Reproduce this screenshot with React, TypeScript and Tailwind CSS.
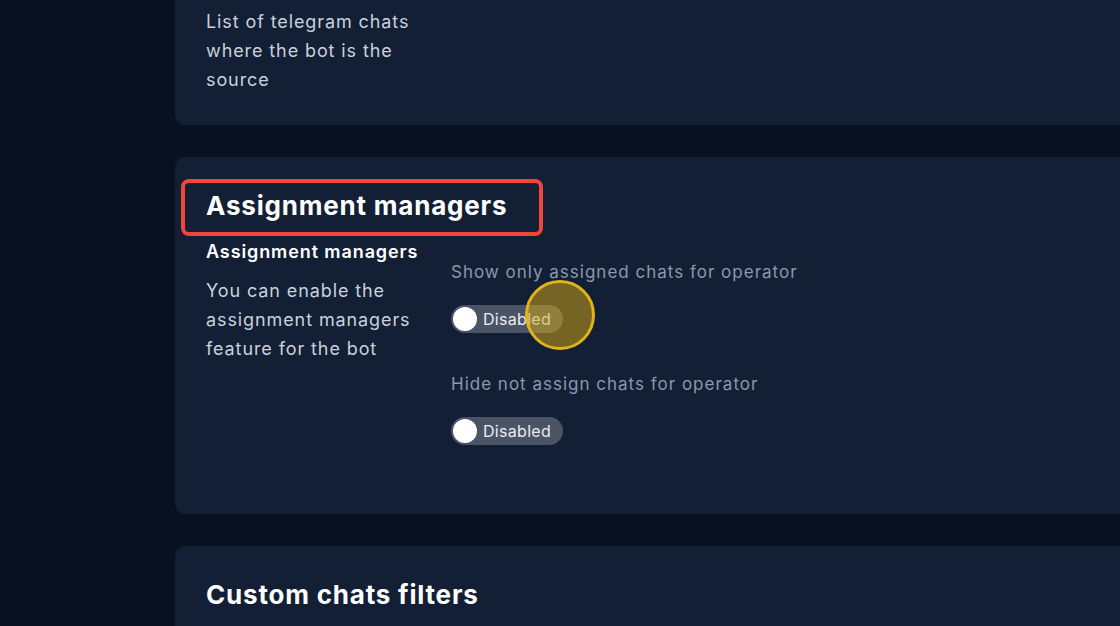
import React from "react";

const font = { fontFamily: "Inter, 'Noto Sans', sans-serif" };

function Toggle({ label }: { label: string }) {
  return (
    <div className="flex h-[28px] w-[112px] items-center gap-[6px] rounded-full bg-[#4a5466] pl-[2px]">
      <span className="h-[24px] w-[24px] rounded-full bg-white" />
      <span className="text-[16px] tracking-[0.3px] text-[#e9ecf1]">{label}</span>
    </div>
  );
}

function Setting({ label, first }: { label: string; first?: boolean }) {
  return (
    <div className={first ? "" : "mt-[37px]"}>
      <p className="text-[17px] leading-[29px] tracking-[1px] text-[#8d98ac]">{label}</p>
      <div className="mt-[18px]">
        <Toggle label="Disabled" />
      </div>
    </div>
  );
}

export default function App() {
  return (
    <div className="h-[626px] w-[1120px] overflow-hidden bg-[#08111f]" style={font}>
      <div className="w-[1200px] pl-[175px]">
        {/* source chats card, scrolled above the top */}
        <section className="-mt-[20px] rounded-[10px] bg-[#131f35] pt-[27px] pb-[31px] pl-[31px]">
          <p className="w-[228px] text-[18px] leading-[29px] tracking-[0.9px] text-[#c9d1dd]">
            List of telegram chats where the bot is the source
          </p>
        </section>

        <section className="mt-[32px] h-[357px] rounded-[10px] bg-[#131f35] pt-[33px] pl-[31px]">
          <div className="relative">
            <h2 className="text-[26px] font-bold leading-[32px] tracking-[0.8px] text-white">Assignment managers</h2>
            <div className="absolute -top-[11px] -left-[25px] h-[57px] w-[362px] rounded-[8px] border-[4px] border-[#f0453a]" />
          </div>
          <div className="mt-[16px] flex">
            <div className="w-[245px]">
              <p className="text-[18px] font-semibold leading-[28px] tracking-[0.9px] text-white">Assignment managers</p>
              <p className="mt-[10px] w-[228px] text-[18px] leading-[29px] tracking-[0.9px] text-[#c9d1dd]">
                You can enable the assignment managers feature for the bot
              </p>
            </div>
            <div className="relative pt-[20px]">
              <Setting label="Show only assigned chats for operator" first />
              <Setting label="Hide not assign chats for operator" />
              <div className="absolute top-[42px] left-[74px] h-[70px] w-[70px] rounded-full border-[3px] border-[#e2b21c] bg-[rgba(215,170,20,0.5)]" />
            </div>
          </div>
        </section>

        <section className="mt-[32px] h-[200px] rounded-[10px] bg-[#131f35] pt-[33px] pl-[31px]">
          <h2 className="text-[26px] font-bold leading-[32px] tracking-[0.8px] text-white">Custom chats filters</h2>
        </section>
      </div>
    </div>
  );
}
